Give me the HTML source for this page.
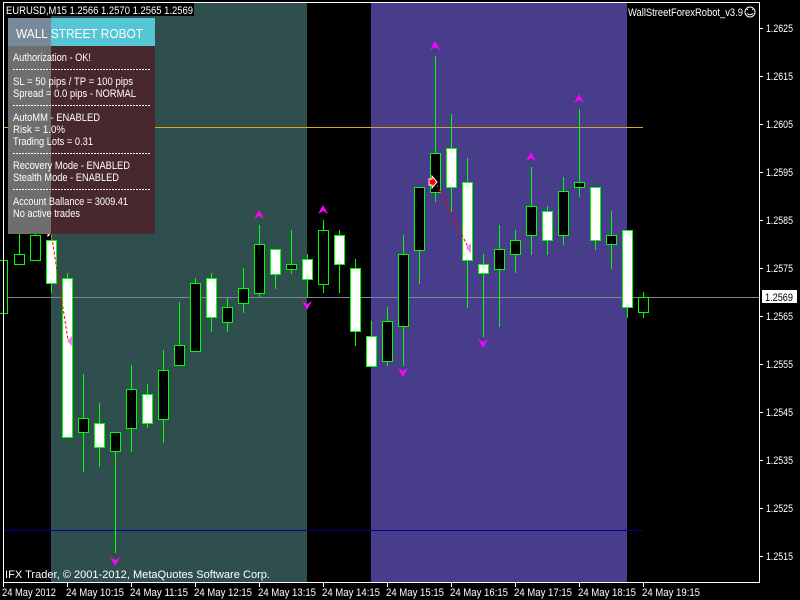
<!DOCTYPE html>
<html><head><meta charset="utf-8"><style>
html,body{margin:0;padding:0;background:#000;width:800px;height:600px;overflow:hidden}
svg{display:block}
text{font-family:"Liberation Sans",sans-serif;fill:#fff}
</style></head><body>
<svg width="800" height="600" viewBox="0 0 800 600" xmlns="http://www.w3.org/2000/svg" shape-rendering="crispEdges">
<rect width="800" height="600" fill="#000"/>
<rect x="51" y="3" width="256" height="579" fill="#2F4F4F"/>
<rect x="371" y="3" width="256" height="579" fill="#483D8B"/>
<line x1="3" y1="127.5" x2="643" y2="127.5" stroke="#DAA520"/>
<line x1="3" y1="297.5" x2="760" y2="297.5" stroke="#778899"/>
<line x1="3" y1="530.5" x2="643" y2="530.5" stroke="#0000A0"/>
<g stroke="#00ff00" stroke-width="1">
<line x1="3.5" y1="255" x2="3.5" y2="318"/>
<line x1="19.5" y1="220" x2="19.5" y2="264"/>
<line x1="35.5" y1="170" x2="35.5" y2="260"/>
<line x1="51.5" y1="225" x2="51.5" y2="293"/>
<line x1="67.5" y1="273" x2="67.5" y2="437"/>
<line x1="83.5" y1="374" x2="83.5" y2="472"/>
<line x1="99.5" y1="403" x2="99.5" y2="467"/>
<line x1="115.5" y1="432" x2="115.5" y2="553"/>
<line x1="131.5" y1="365" x2="131.5" y2="452"/>
<line x1="147.5" y1="384" x2="147.5" y2="428"/>
<line x1="163.5" y1="350" x2="163.5" y2="443"/>
<line x1="179.5" y1="302" x2="179.5" y2="365"/>
<line x1="195.5" y1="278" x2="195.5" y2="351"/>
<line x1="211.5" y1="273" x2="211.5" y2="332"/>
<line x1="227.5" y1="298" x2="227.5" y2="332"/>
<line x1="243.5" y1="268" x2="243.5" y2="313"/>
<line x1="259.5" y1="225" x2="259.5" y2="297"/>
<line x1="275.5" y1="249" x2="275.5" y2="289"/>
<line x1="291.5" y1="230" x2="291.5" y2="274"/>
<line x1="307.5" y1="254" x2="307.5" y2="297"/>
<line x1="323.5" y1="220" x2="323.5" y2="293"/>
<line x1="339.5" y1="230" x2="339.5" y2="293"/>
<line x1="355.5" y1="259" x2="355.5" y2="346"/>
<line x1="371.5" y1="321" x2="371.5" y2="366"/>
<line x1="387.5" y1="307" x2="387.5" y2="366"/>
<line x1="403.5" y1="235" x2="403.5" y2="366"/>
<line x1="419.5" y1="187" x2="419.5" y2="284"/>
<line x1="435.5" y1="56" x2="435.5" y2="202"/>
<line x1="451.5" y1="114" x2="451.5" y2="212"/>
<line x1="467.5" y1="158" x2="467.5" y2="308"/>
<line x1="483.5" y1="254" x2="483.5" y2="337"/>
<line x1="499.5" y1="225" x2="499.5" y2="327"/>
<line x1="515.5" y1="230" x2="515.5" y2="273"/>
<line x1="531.5" y1="167" x2="531.5" y2="255"/>
<line x1="547.5" y1="206" x2="547.5" y2="255"/>
<line x1="563.5" y1="177" x2="563.5" y2="245"/>
<line x1="579.5" y1="109" x2="579.5" y2="197"/>
<line x1="595.5" y1="187" x2="595.5" y2="250"/>
<line x1="611.5" y1="211" x2="611.5" y2="269"/>
<line x1="627.5" y1="230" x2="627.5" y2="318"/>
<line x1="643.5" y1="292" x2="643.5" y2="318"/>
<rect x="-2.5" y="260.5" width="10" height="53" fill="#000"/>
<rect x="14.5" y="254.5" width="10" height="10" fill="#000"/>
<rect x="30.5" y="235.5" width="10" height="25" fill="#000"/>
<rect x="46.5" y="240.5" width="10" height="43" fill="#fff"/>
<rect x="62.5" y="278.5" width="10" height="159" fill="#fff"/>
<rect x="78.5" y="418.5" width="10" height="14" fill="#000"/>
<rect x="94.5" y="423.5" width="10" height="24" fill="#fff"/>
<rect x="110.5" y="432.5" width="10" height="19" fill="#000"/>
<rect x="126.5" y="389.5" width="10" height="39" fill="#000"/>
<rect x="142.5" y="394.5" width="10" height="29" fill="#fff"/>
<rect x="158.5" y="370.5" width="10" height="49" fill="#000"/>
<rect x="174.5" y="345.5" width="10" height="20" fill="#000"/>
<rect x="190.5" y="283.5" width="10" height="68" fill="#000"/>
<rect x="206.5" y="278.5" width="10" height="39" fill="#fff"/>
<rect x="222.5" y="307.5" width="10" height="15" fill="#000"/>
<rect x="238.5" y="288.5" width="10" height="15" fill="#000"/>
<rect x="254.5" y="244.5" width="10" height="49" fill="#000"/>
<rect x="270.5" y="249.5" width="10" height="25" fill="#fff"/>
<rect x="286.5" y="264.5" width="10" height="5" fill="#000"/>
<rect x="302.5" y="259.5" width="10" height="20" fill="#fff"/>
<rect x="318.5" y="230.5" width="10" height="54" fill="#000"/>
<rect x="334.5" y="235.5" width="10" height="29" fill="#fff"/>
<rect x="350.5" y="268.5" width="10" height="63" fill="#fff"/>
<rect x="366.5" y="336.5" width="10" height="30" fill="#fff"/>
<rect x="382.5" y="321.5" width="10" height="40" fill="#000"/>
<rect x="398.5" y="254.5" width="10" height="72" fill="#000"/>
<rect x="414.5" y="187.5" width="10" height="63" fill="#000"/>
<rect x="430.5" y="153.5" width="10" height="39" fill="#000"/>
<rect x="446.5" y="148.5" width="10" height="39" fill="#fff"/>
<rect x="462.5" y="182.5" width="10" height="78" fill="#fff"/>
<rect x="478.5" y="264.5" width="10" height="9" fill="#fff"/>
<rect x="494.5" y="249.5" width="10" height="20" fill="#000"/>
<rect x="510.5" y="240.5" width="10" height="14" fill="#000"/>
<rect x="526.5" y="206.5" width="10" height="29" fill="#000"/>
<rect x="542.5" y="211.5" width="10" height="29" fill="#fff"/>
<rect x="558.5" y="191.5" width="10" height="44" fill="#000"/>
<rect x="574.5" y="182.5" width="10" height="5" fill="#000"/>
<rect x="590.5" y="187.5" width="10" height="53" fill="#fff"/>
<rect x="606.5" y="235.5" width="10" height="9" fill="#000"/>
<rect x="622.5" y="230.5" width="10" height="77" fill="#fff"/>
<rect x="638.5" y="297.5" width="10" height="15" fill="#000"/>
</g>
<line x1="51" y1="232" x2="68" y2="340" stroke="#ff0000" stroke-dasharray="3,2" shape-rendering="auto"/>
<line x1="437" y1="185" x2="468" y2="247" stroke="#ff0000" stroke-dasharray="3,2" shape-rendering="auto"/>
<g shape-rendering="auto">
<path d="M45,227 h3 v-3 l5,6 l-5,6 v-3 h-3z" fill="#ff0000" stroke="#fff" stroke-width="1"/>
<path d="M429,179 h3 v-3 l5,6 l-5,6 v-3 h-3z" fill="#ff0000" stroke="#fff" stroke-width="1"/>
<path d="M72,336 v10 l-5,-5z" fill="#ee82ee"/>
<path d="M471,243 v10 l-5,-5z" fill="#ee82ee"/>
<g fill="#ff00ff">
<path d="M35,164 l5,9 l-5,-3 l-5,3z"/>
<path d="M259,210 l5,9 l-5,-3 l-5,3z"/>
<path d="M323,205 l5,9 l-5,-3 l-5,3z"/>
<path d="M435,41 l5,9 l-5,-3 l-5,3z"/>
<path d="M531,152 l5,9 l-5,-3 l-5,3z"/>
<path d="M579,94 l5,9 l-5,-3 l-5,3z"/>
<path d="M115,566 l5,-9 l-5,3 l-5,-3z"/>
<path d="M307,310 l5,-9 l-5,3 l-5,-3z"/>
<path d="M403,377 l5,-9 l-5,3 l-5,-3z"/>
<path d="M483,348 l5,-9 l-5,3 l-5,-3z"/>
</g>
</g>
<rect x="8" y="18" width="43" height="28" fill="#78899a"/>
<rect x="51" y="18" width="104" height="28" fill="#55c6d4"/>
<rect x="8" y="46" width="43" height="188" fill="#6e6e6e"/>
<rect x="51" y="46" width="104" height="188" fill="#48282c"/>
<text x="16" y="38" font-size="13" textLength="127" lengthAdjust="spacingAndGlyphs">WALL STREET ROBOT</text>
<g font-size="11" lengthAdjust="spacingAndGlyphs">
<text x="13" y="61" textLength="78" lengthAdjust="spacingAndGlyphs">Authorization - OK!</text>
<text x="13" y="85" textLength="120" lengthAdjust="spacingAndGlyphs">SL = 50 pips / TP = 100 pips</text>
<text x="13" y="97" textLength="123" lengthAdjust="spacingAndGlyphs">Spread = 0.0 pips - NORMAL</text>
<text x="13" y="121" textLength="87" lengthAdjust="spacingAndGlyphs">AutoMM - ENABLED</text>
<text x="13" y="133" textLength="52" lengthAdjust="spacingAndGlyphs">Risk = 1.0%</text>
<text x="13" y="145" textLength="80" lengthAdjust="spacingAndGlyphs">Trading Lots = 0.31</text>
<text x="13" y="169" textLength="117" lengthAdjust="spacingAndGlyphs">Recovery Mode - ENABLED</text>
<text x="13" y="181" textLength="106" lengthAdjust="spacingAndGlyphs">Stealth Mode - ENABLED</text>
<text x="13" y="205" textLength="115" lengthAdjust="spacingAndGlyphs">Account Ballance = 3009.41</text>
<text x="13" y="217" textLength="67" lengthAdjust="spacingAndGlyphs">No active trades</text>
</g>
<g stroke="#fff" stroke-dasharray="2,1">
<line x1="13" y1="69.5" x2="150" y2="69.5"/>
<line x1="13" y1="105.5" x2="150" y2="105.5"/>
<line x1="13" y1="153.5" x2="150" y2="153.5"/>
<line x1="13" y1="189.5" x2="150" y2="189.5"/>
</g>
<rect x="3.5" y="2.5" width="756" height="580" fill="none" stroke="#fff"/>
<rect x="5" y="3" width="189" height="13" fill="#000"/>
<text x="6" y="14" font-size="11" textLength="187" lengthAdjust="spacingAndGlyphs">EURUSD,M15  1.2566 1.2570 1.2565 1.2569</text>
<text x="628" y="16" font-size="11" textLength="115" lengthAdjust="spacingAndGlyphs">WallStreetForexRobot_v3.9</text>
<circle cx="750" cy="12" r="5" fill="none" stroke="#fff" shape-rendering="auto"/>
<path d="M747,13.5 q3,2.5 6,0" fill="none" stroke="#fff" shape-rendering="auto"/>
<rect x="747" y="9" width="1" height="1" fill="#fff"/><rect x="752" y="9" width="1" height="1" fill="#fff"/>
<text x="5" y="578" font-size="11" textLength="265" lengthAdjust="spacingAndGlyphs">IFX Trader, © 2001-2012, MetaQuotes Software Corp.</text>
<g font-size="11">
<text x="766" y="32" textLength="27" lengthAdjust="spacingAndGlyphs">1.2625</text><line x1="760" y1="28.5" x2="763" y2="28.5" stroke="#fff"/>
<text x="766" y="80" textLength="27" lengthAdjust="spacingAndGlyphs">1.2615</text><line x1="760" y1="76.5" x2="763" y2="76.5" stroke="#fff"/>
<text x="766" y="128" textLength="27" lengthAdjust="spacingAndGlyphs">1.2605</text><line x1="760" y1="124.5" x2="763" y2="124.5" stroke="#fff"/>
<text x="766" y="176" textLength="27" lengthAdjust="spacingAndGlyphs">1.2595</text><line x1="760" y1="172.5" x2="763" y2="172.5" stroke="#fff"/>
<text x="766" y="224" textLength="27" lengthAdjust="spacingAndGlyphs">1.2585</text><line x1="760" y1="220.5" x2="763" y2="220.5" stroke="#fff"/>
<text x="766" y="272" textLength="27" lengthAdjust="spacingAndGlyphs">1.2575</text><line x1="760" y1="268.5" x2="763" y2="268.5" stroke="#fff"/>
<text x="766" y="320" textLength="27" lengthAdjust="spacingAndGlyphs">1.2565</text><line x1="760" y1="316.5" x2="763" y2="316.5" stroke="#fff"/>
<text x="766" y="368" textLength="27" lengthAdjust="spacingAndGlyphs">1.2555</text><line x1="760" y1="364.5" x2="763" y2="364.5" stroke="#fff"/>
<text x="766" y="416" textLength="27" lengthAdjust="spacingAndGlyphs">1.2545</text><line x1="760" y1="412.5" x2="763" y2="412.5" stroke="#fff"/>
<text x="766" y="464" textLength="27" lengthAdjust="spacingAndGlyphs">1.2535</text><line x1="760" y1="460.5" x2="763" y2="460.5" stroke="#fff"/>
<text x="766" y="512" textLength="27" lengthAdjust="spacingAndGlyphs">1.2525</text><line x1="760" y1="508.5" x2="763" y2="508.5" stroke="#fff"/>
<text x="766" y="560" textLength="27" lengthAdjust="spacingAndGlyphs">1.2515</text><line x1="760" y1="556.5" x2="763" y2="556.5" stroke="#fff"/>
<rect x="762" y="290" width="35" height="13" fill="#fff"/>
<text x="765" y="301" style="fill:#000" textLength="28" lengthAdjust="spacingAndGlyphs">1.2569</text>
</g>
<g font-size="11">
<text x="2" y="596" textLength="54" lengthAdjust="spacingAndGlyphs">24 May 2012</text>
<text x="66" y="596" textLength="58" lengthAdjust="spacingAndGlyphs">24 May 10:15</text>
<text x="130" y="596" textLength="58" lengthAdjust="spacingAndGlyphs">24 May 11:15</text>
<text x="194" y="596" textLength="58" lengthAdjust="spacingAndGlyphs">24 May 12:15</text>
<text x="258" y="596" textLength="58" lengthAdjust="spacingAndGlyphs">24 May 13:15</text>
<text x="322" y="596" textLength="58" lengthAdjust="spacingAndGlyphs">24 May 14:15</text>
<text x="386" y="596" textLength="58" lengthAdjust="spacingAndGlyphs">24 May 15:15</text>
<text x="450" y="596" textLength="58" lengthAdjust="spacingAndGlyphs">24 May 16:15</text>
<text x="514" y="596" textLength="58" lengthAdjust="spacingAndGlyphs">24 May 17:15</text>
<text x="578" y="596" textLength="58" lengthAdjust="spacingAndGlyphs">24 May 18:15</text>
<text x="642" y="596" textLength="58" lengthAdjust="spacingAndGlyphs">24 May 19:15</text>
</g>
<g stroke="#fff">
<line x1="3.5" y1="583" x2="3.5" y2="587"/><line x1="67.5" y1="583" x2="67.5" y2="587"/>
<line x1="131.5" y1="583" x2="131.5" y2="587"/><line x1="195.5" y1="583" x2="195.5" y2="587"/>
<line x1="259.5" y1="583" x2="259.5" y2="587"/><line x1="323.5" y1="583" x2="323.5" y2="587"/>
<line x1="387.5" y1="583" x2="387.5" y2="587"/><line x1="451.5" y1="583" x2="451.5" y2="587"/>
<line x1="515.5" y1="583" x2="515.5" y2="587"/><line x1="579.5" y1="583" x2="579.5" y2="587"/>
<line x1="643.5" y1="583" x2="643.5" y2="587"/>
</g>
</svg>
</body></html>
